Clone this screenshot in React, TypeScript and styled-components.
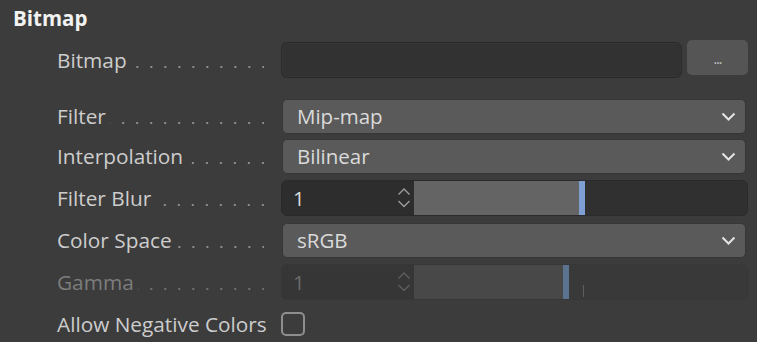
import styled, { createGlobalStyle } from "styled-components";

const GlobalStyle = createGlobalStyle({
  "html, body": {
    margin: 0,
    padding: 0,
    background: "#3c3c3c",
  },
  body: {
    fontFamily: '"Open Sans", "Noto Sans", sans-serif',
    color: "#cfcfcf",
  },
});

const Panel = styled.div({
  width: "757px",
  height: "342px",
  overflow: "hidden",
  background: "#3c3c3c",
  boxSizing: "border-box",
  padding: "0 9px 0 13px",
});

const Header = styled.div({
  height: "38px",
  lineHeight: "36px",
  fontSize: "20.5px",
  fontWeight: 700,
  color: "#f2f2f2",
});

const Rows = styled.div({
  display: "flex",
  flexDirection: "column",
  paddingLeft: "44px",
});

const Row = styled.div<{ $h: number; $gapAfter?: number }>((props) => ({
  display: "flex",
  alignItems: "center",
  gap: "11px",
  height: `${props.$h}px`,
  marginBottom: `${props.$gapAfter ?? 0}px`,
}));

const Label = styled.div<{ $disabled?: boolean }>((props) => ({
  width: "213px",
  flexShrink: 0,
  display: "flex",
  alignItems: "center",
  fontSize: "20.8px",
  whiteSpace: "nowrap",
  color: props.$disabled ? "#7c7c7c" : "#cdcdcd",
}));

const Leader = styled.span<{ $disabled?: boolean }>((props) => ({
  flex: 1,
  height: "16px",
  marginLeft: "4px",
  marginRight: "6px",
  backgroundImage: `linear-gradient(to right, transparent 12px, ${
    props.$disabled ? "#6f6f6f" : "#8c8c8c"
  } 12px)`,
  backgroundSize: "14px 2px",
  backgroundRepeat: "repeat-x",
  backgroundPosition: "right 0 bottom 0",
}));

const Control = styled.div({
  flex: 1,
  display: "flex",
  alignItems: "center",
  gap: "5px",
  height: "100%",
});

const PathInput = styled.div({
  flex: 1,
  height: "36px",
  boxSizing: "border-box",
  background: "#323232",
  border: "1px solid #2a2a2a",
  boxShadow: "inset 0 0 0 1px #363636",
  borderRadius: "6px",
});

const BrowseButton = styled.div({
  width: "61px",
  height: "35px",
  alignSelf: "flex-start",
  marginTop: "2px",
  boxSizing: "border-box",
  background: "#555555",
  borderRadius: "5px",
  color: "#c4c4c4",
  fontSize: "14px",
  display: "flex",
  alignItems: "flex-end",
  justifyContent: "center",
  paddingBottom: "7px",
  letterSpacing: "-1px",
});

const Dropdown = styled.div({
  flex: 1,
  height: "35px",
  margin: "0 2px 0 1px",
  boxSizing: "border-box",
  background: "#5a5a5a",
  border: "1px solid #363636",
  borderRadius: "5px",
  display: "flex",
  alignItems: "center",
  justifyContent: "space-between",
  padding: "0 9px 0 14px",
  fontSize: "20.5px",
  color: "#dadada",
});

const Chevron = () => (
  <svg width="15" height="9" viewBox="0 0 15 9">
    <polyline
      points="1.5,1.5 7.5,7.5 13.5,1.5"
      fill="none"
      stroke="#e4e4e4"
      strokeWidth="2"
    />
  </svg>
);

const Field = styled.div<{ $disabled?: boolean }>((props) => ({
  flex: 1,
  height: "36px",
  boxSizing: "border-box",
  display: "flex",
  border: `1px solid ${props.$disabled ? "#373737" : "#2a2a2a"}`,
  borderRadius: "6px",
  overflow: "hidden",
  background: props.$disabled ? "#393939" : "#303030",
}));

const NumberPart = styled.div<{ $disabled?: boolean }>((props) => ({
  width: "132px",
  flexShrink: 0,
  boxSizing: "border-box",
  display: "flex",
  alignItems: "center",
  justifyContent: "space-between",
  padding: "0 3px 0 11px",
  background: props.$disabled ? "#363636" : "#2d2d2d",
  fontSize: "20.5px",
  color: props.$disabled ? "#6a6a6a" : "#dcdcdc",
}));

const Spinner = ({ color }: { color: string }) => (
  <svg width="14" height="22" viewBox="0 0 14 22">
    <polyline
      points="1.5,7.5 7,2 12.5,7.5"
      fill="none"
      stroke={color}
      strokeWidth="1.4"
    />
    <polyline
      points="1.5,14 7,19.5 12.5,14"
      fill="none"
      stroke={color}
      strokeWidth="1.4"
    />
  </svg>
);

const Track = styled.div({
  flex: 1,
  position: "relative",
  display: "flex",
});

const Fill = styled.div<{ $disabled?: boolean }>((props) => ({
  height: "100%",
  boxSizing: "border-box",
  background: props.$disabled ? "#484848" : "#646464",
  borderRight: `6px solid ${props.$disabled ? "#5b7291" : "#7e9fd4"}`,
}));

const Tick = styled.div({
  position: "absolute",
  left: "169px",
  top: "20px",
  width: "1px",
  height: "12px",
  background: "#5e5e5e",
});

const Checkbox = styled.div({
  width: "24px",
  height: "24px",
  boxSizing: "border-box",
  border: "2px solid #8e8e8e",
  borderRadius: "5px",
});

interface SliderProps {
  value: string;
  ratio: number;
  disabled?: boolean;
}

const SliderField = ({ value, ratio, disabled }: SliderProps) => (
  <Field $disabled={disabled}>
    <NumberPart $disabled={disabled}>
      <span>{value}</span>
      <Spinner color={disabled ? "#5e5e5e" : "#9c9c9c"} />
    </NumberPart>
    <Track>
      <Fill $disabled={disabled} style={{ width: `${ratio * 100}%` }} />
      {disabled && <Tick />}
    </Track>
  </Field>
);

const App = () => {
  return (
    <>
      <GlobalStyle />
      <Panel>
        <Header>Bitmap</Header>
        <Rows>
          <Row $h={44} $gapAfter={14}>
            <Label>
              Bitmap
              <Leader />
            </Label>
            <Control>
              <PathInput />
              <BrowseButton>...</BrowseButton>
            </Control>
          </Row>
          <Row $h={40}>
            <Label>
              Filter
              <Leader />
            </Label>
            <Control>
              <Dropdown>
                Mip-map
                <Chevron />
              </Dropdown>
            </Control>
          </Row>
          <Row $h={40}>
            <Label>
              Interpolation
              <Leader />
            </Label>
            <Control>
              <Dropdown>
                Bilinear
                <Chevron />
              </Dropdown>
            </Control>
          </Row>
          <Row $h={44}>
            <Label>
              Filter Blur
              <Leader />
            </Label>
            <Control>
              <SliderField value="1" ratio={0.513} />
            </Control>
          </Row>
          <Row $h={40}>
            <Label>
              Color Space
              <Leader />
            </Label>
            <Control>
              <Dropdown>
                sRGB
                <Chevron />
              </Dropdown>
            </Control>
          </Row>
          <Row $h={44}>
            <Label $disabled>
              Gamma
              <Leader $disabled />
            </Label>
            <Control>
              <SliderField value="1" ratio={0.465} disabled />
            </Control>
          </Row>
          <Row $h={40}>
            <Label>Allow Negative Colors</Label>
            <Checkbox />
          </Row>
        </Rows>
      </Panel>
    </>
  );
};

export default App;
